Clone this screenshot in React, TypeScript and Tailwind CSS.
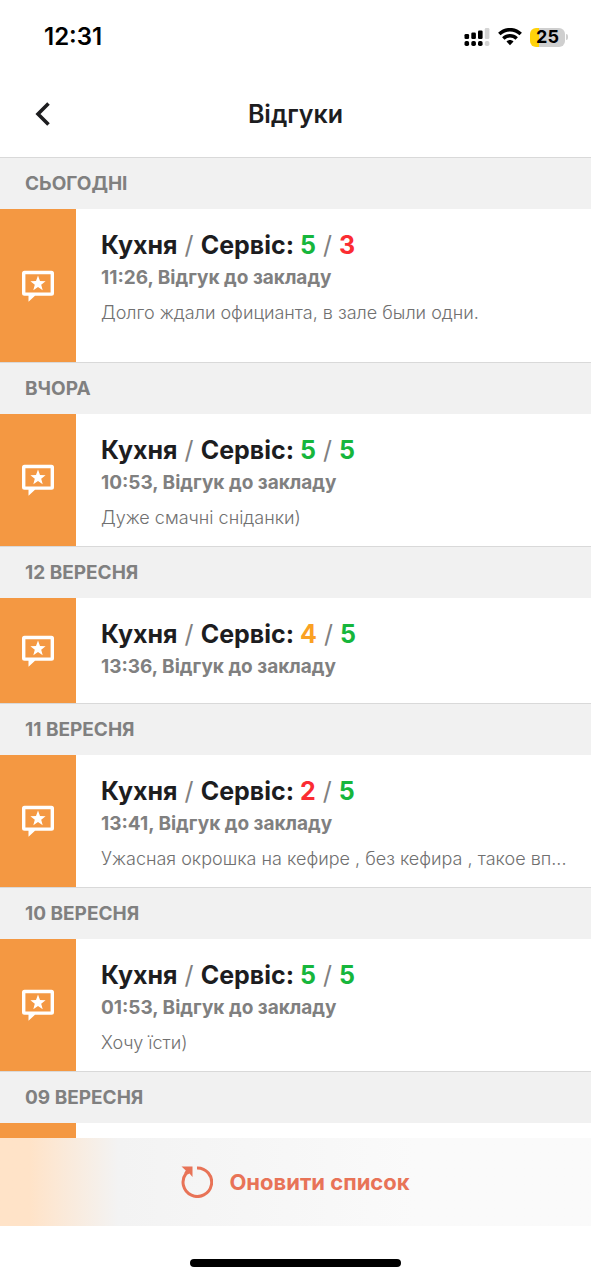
import React from 'react';
import { clsx } from 'clsx';

interface Review {
  kitchen?: number;
  service?: number;
  time?: string;
  comment?: string;
}

interface ReviewGroup {
  date: string;
  reviews: Review[];
}

const groups: ReviewGroup[] = [
  {
    date: 'Сьогодні',
    reviews: [{ kitchen: 5, service: 3, time: '11:26', comment: 'Долго ждали официанта, в зале были одни.\n\n' }],
  },
  { date: 'Вчора', reviews: [{ kitchen: 5, service: 5, time: '10:53', comment: 'Дуже смачні сніданки)' }] },
  { date: '12 вересня', reviews: [{ kitchen: 4, service: 5, time: '13:36' }] },
  {
    date: '11 вересня',
    reviews: [{ kitchen: 2, service: 5, time: '13:41', comment: 'Ужасная окрошка на кефире , без кефира , такое вп...' }],
  },
  { date: '10 вересня', reviews: [{ kitchen: 5, service: 5, time: '01:53', comment: 'Хочу їсти)' }] },
  { date: '09 вересня', reviews: [{}] },
];

const scoreColor = (score: number) => {
  if (score >= 5) return 'text-[#16b63c]';
  if (score === 4) return 'text-[#faa123]';
  return 'text-[#fb2c32]';
};

const StatusBar: React.FC = () => (
  <div className="flex h-[72px] shrink-0 items-center justify-between pl-11 pr-[23px] pt-0.5 text-black">
    <span className="text-2xl font-semibold leading-7">12:31</span>
    <div className="flex items-center gap-2">
      <svg className="h-[18px] w-[26px]" viewBox="0 0 26 18">
        <rect x="0.5" y="6" width="4.6" height="5" rx="1.3" />
        <rect x="7.3" y="4.5" width="4.6" height="6.5" rx="1.3" />
        <rect x="14" y="2.5" width="4.6" height="8.5" rx="1.3" />
        <rect x="20.8" y="0" width="4.6" height="11" rx="1.3" fill="#d4d4d4" />
        <rect x="0.5" y="13" width="4.6" height="5" rx="1.7" />
        <rect x="7.3" y="13" width="4.6" height="5" rx="1.7" />
        <rect x="14" y="13" width="4.6" height="5" rx="1.7" />
        <rect x="20.8" y="13" width="4.6" height="5" rx="1.7" fill="#d4d4d4" />
      </svg>
      <svg className="h-[18px] w-6" viewBox="0 0 24 18" fill="none" stroke="#000" strokeWidth="3.5">
        <path d="M1.3 6C7.3 0.2 16.7 0.2 22.7 6" />
        <path d="M5.3 10.4C9.2 6.7 14.8 6.7 18.7 10.4" />
        <path d="M8.5 13.6C10.6 11.6 13.4 11.6 15.5 13.6L12 17.2Z" fill="#000" stroke="none" />
      </svg>
      <div className="flex items-center gap-px">
        <div className="flex h-[19px] w-[35px] items-center justify-center rounded-md bg-linear-to-r from-[#ffd20a] from-25% to-[#cfcfcf] to-25% text-[18px] font-bold leading-5">
          25
        </div>
        <div className="h-[6px] w-[2px] rounded-r-full bg-[#cfcfcf]" />
      </div>
    </div>
  </div>
);

const ReviewIcon: React.FC = () => (
  <svg className="h-8 w-8" viewBox="0 0 32 32" fill="#fff">
    <path
      fillRule="evenodd"
      d="M2.5 0.8H29.5Q32 0.8 32 3.3V23.3Q32 25.8 29.5 25.8H13L6.5 31.8V25.8H2.5Q0 25.8 0 23.3V3.3Q0 0.8 2.5 0.8ZM3.4 4.2V22.4H28.6V4.2Z"
    />
    <path d="M16 5.5L18 11L23.6 11.2L19.2 14.7L20.7 20.2L16 17.1L11.3 20.2L12.8 14.7L8.4 11.2L14 11Z" />
  </svg>
);

const Divider: React.FC = () => <span className="font-normal text-[#808080]"> / </span>;

const ReviewRow: React.FC<{ review: Review }> = ({ review }) => {
  const { kitchen, service, time, comment } = review;

  return (
    <li className="flex min-h-[105px] bg-white">
      <div className="flex w-[76px] shrink-0 items-center justify-center bg-[#f49842]">
        <ReviewIcon />
      </div>
      {kitchen !== undefined && service !== undefined && (
        <div className="min-w-0 flex-1 pb-[18px] pl-[25px] pr-5 pt-[21px]">
          <h3 className="text-[25px] font-bold leading-[30px] text-[#1d1d1f]">
            Кухня
            <Divider />
            Сервіс: <span className={clsx(scoreColor(kitchen))}>{kitchen}</span>
            <Divider />
            <span className={clsx(scoreColor(service))}>{service}</span>
          </h3>
          <p className="mt-1.5 text-[19px] font-bold leading-6 text-[#808080]">{time}, Відгук до закладу</p>
          {comment && (
            <p className="mt-3 overflow-hidden whitespace-pre text-[18px] font-light leading-[21px] text-[#707070]">
              {comment}
            </p>
          )}
        </div>
      )}
    </li>
  );
};

const App: React.FC = () => {
  return (
    <div className="flex h-screen flex-col overflow-hidden bg-white font-['Inter',sans-serif]">
      <StatusBar />

      <header className="grid h-[85px] shrink-0 grid-cols-[76px_1fr_76px] items-center pb-0.5">
        <button type="button" aria-label="Назад" className="flex h-11 items-center pl-[34px]">
          <svg className="h-6 w-4" viewBox="0 0 16 24" fill="none" stroke="#1d1d1f" strokeWidth="3.6">
            <path d="M14.5 1.5L4 12L14.5 22.5" />
          </svg>
        </button>
        <h1 className="text-center text-[25px] font-semibold leading-[30px] text-[#1d1d1f]">Відгуки</h1>
      </header>

      {/* Reviews grouped by date */}
      <main className="min-h-0 flex-1 overflow-y-auto [scrollbar-width:none]">
        {groups.map(group => (
          <section key={group.date}>
            <h2 className="border-t border-[#d9d9d9] bg-[#f1f1f1] px-[25px] py-3 text-[19px] font-bold uppercase leading-[27px] text-[#808080]">
              {group.date}
            </h2>
            <ul>
              {group.reviews.map((review, index) => (
                <ReviewRow key={index} review={review} />
              ))}
            </ul>
          </section>
        ))}
      </main>

      <button
        type="button"
        className="flex h-[88px] w-full shrink-0 items-center justify-center gap-4 bg-linear-to-r from-[#ffe3c8] from-5% via-[#f3f3f3] via-20% to-[#fafafa] to-70% text-[22px] font-bold text-[#e87357]"
      >
        <svg className="h-8 w-8" viewBox="0 0 32 32" fill="none">
          <path d="M16 1.9A14.3 14.3 0 1 1 5 7.5" stroke="#e87357" strokeWidth="3" />
          <path d="M0.5 0.5H11.5V11L8.5 7.5L5.5 9L3.5 6.5L4.8 4.4Z" fill="#e87357" />
        </svg>
        Оновити список
      </button>

      <footer className="flex h-[54px] shrink-0 items-end justify-center pb-[13px]">
        <div className="h-2 w-[211px] rounded-full bg-black" />
      </footer>
    </div>
  );
};

export default App;
